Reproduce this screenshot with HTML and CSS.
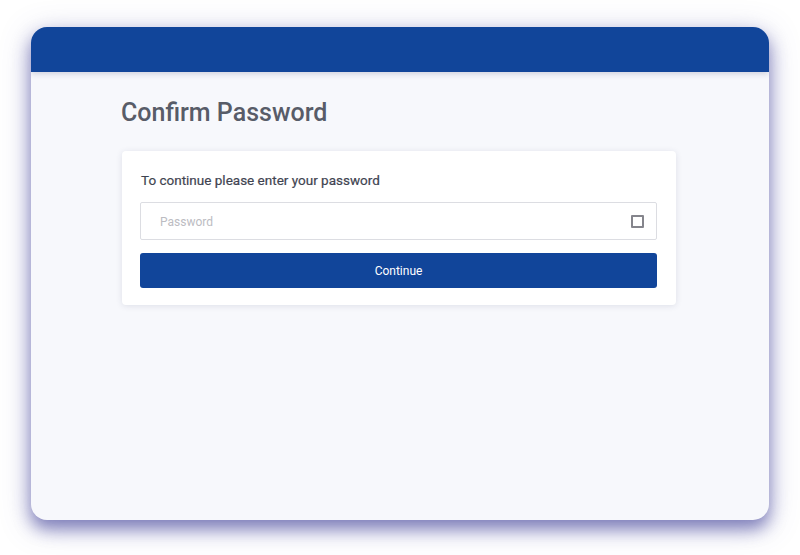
FILE: index.html
```html
<!DOCTYPE html>
<html>
<head>
<meta charset="utf-8">
<link rel="stylesheet" href="styles.css">
</head>
<body>
<div class="stage">
  <div class="window">
    <div class="topbar"></div>
    <main class="content">
      <h1 class="title">Confirm Password</h1>
      <section class="card">
        <p class="prompt">To continue please enter your password</p>
        <label class="field">
          <input class="input" type="password" placeholder="Password">
          <span class="toggle"></span>
        </label>
        <button class="btn">Continue</button>
      </section>
    </main>
  </div>
</div>
</body>
</html>
```
FILE: styles.css
```css
* { box-sizing: border-box; }
html, body { margin: 0; padding: 0; background: #ffffff; }
body { font-family: Roboto, "Liberation Sans", sans-serif; }
.stage {
  width: 800px;
  height: 555px;
  padding: 27px 31px 35px 31px;
}
.window {
  width: 738px;
  height: 493px;
  border-radius: 16px;
  background: #f7f8fc;
  overflow: hidden;
  box-shadow: 0 9px 16px rgba(60, 60, 150, 0.55), 0 6px 30px rgba(90, 90, 170, 0.35);
  display: flex;
  flex-direction: column;
}
.topbar {
  height: 45px;
  flex: none;
  background: #11459a;
  box-shadow: 0 2px 6px rgba(30, 40, 90, 0.18);
  position: relative;
  z-index: 1;
}
.content {
  padding: 24px 0 0 90px;
}
.title {
  margin: 0;
  font-size: 25px;
  line-height: 33px;
  font-weight: 500;
  color: #585c68;
}
.card {
  margin: 22px 0 0 1px;
  width: 554px;
  background: #ffffff;
  border-radius: 4px;
  box-shadow: 0 1px 6px rgba(40, 50, 90, 0.12);
  padding: 20px 19px 17px 18px;
}
.prompt {
  margin: 0 0 0 1px;
  font-size: 13.5px;
  line-height: 18px;
  color: #3f4451;
  font-weight: 400;
  -webkit-text-stroke: 0.2px #3f4451;
}
.field {
  margin-top: 13px;
  display: flex;
  align-items: center;
  height: 38px;
  border: 1px solid #dcdde2;
  border-radius: 2px;
  padding: 1px 12px 0 19px;
}
.input {
  flex: 1;
  border: 0;
  outline: none;
  font-family: inherit;
  font-size: 12px;
  color: #333;
  background: transparent;
  padding: 0;
}
.input::placeholder { color: #bcbcc2; }
.toggle {
  width: 13px;
  height: 13px;
  border: 2px solid #85858c;
  border-radius: 1px;
}
.btn {
  margin-top: 13px;
  width: 100%;
  height: 35px;
  border: 0;
  border-radius: 3px;
  background: #11459a;
  color: #ffffff;
  font-family: inherit;
  font-size: 12px;
  cursor: pointer;
}
```
